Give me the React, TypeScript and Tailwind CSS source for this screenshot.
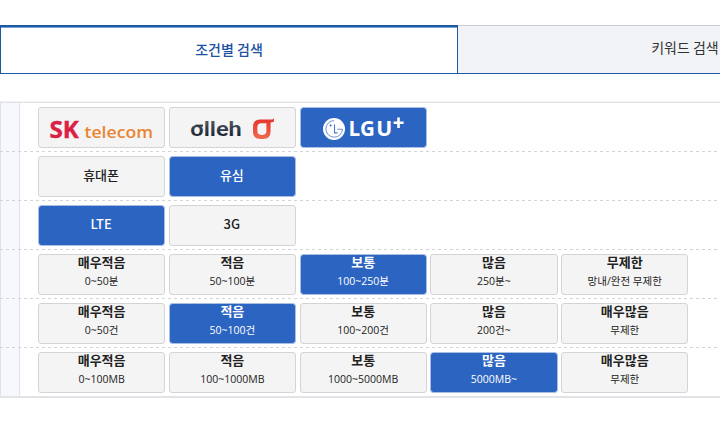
import clsx from "clsx";

type Option = { title: string; desc?: string; active?: boolean };

const simpleRows: Option[][] = [
  [{ title: "휴대폰" }, { title: "유심", active: true }],
  [{ title: "LTE", active: true }, { title: "3G" }],
];

const usageRows: Option[][] = [
  [
    { title: "매우적음", desc: "0~50분" },
    { title: "적음", desc: "50~100분" },
    { title: "보통", desc: "100~250분", active: true },
    { title: "많음", desc: "250분~" },
    { title: "무제한", desc: "망내/완전 무제한" },
  ],
  [
    { title: "매우적음", desc: "0~50건" },
    { title: "적음", desc: "50~100건", active: true },
    { title: "보통", desc: "100~200건" },
    { title: "많음", desc: "200건~" },
    { title: "매우많음", desc: "무제한" },
  ],
  [
    { title: "매우적음", desc: "0~100MB" },
    { title: "적음", desc: "100~1000MB" },
    { title: "보통", desc: "1000~5000MB" },
    { title: "많음", desc: "5000MB~", active: true },
    { title: "매우많음", desc: "무제한" },
  ],
];

const SkLogo = () => (
  <svg width="125" height="39" viewBox="0 0 125 39">
    <text x="10.5" y="29.8" fontFamily="Noto Sans" fontWeight="700" fontSize="23.5" fill="#dc1f45" stroke="#dc1f45" strokeWidth="0.4" textLength="29.5" lengthAdjust="spacingAndGlyphs">
      SK
    </text>
    <text x="45.5" y="29.8" fontFamily="Open Sans" fontWeight="600" fontSize="17" fill="#ea8433" textLength="68.5" lengthAdjust="spacingAndGlyphs">
      telecom
    </text>
  </svg>
);

const OllehLogo = () => (
  <svg width="125" height="39" viewBox="0 0 125 39">
    <defs>
      <linearGradient id="olleh-text" x1="0" y1="0" x2="0" y2="1">
        <stop offset="0.2" stopColor="#4a535f" />
        <stop offset="1" stopColor="#0b1422" />
      </linearGradient>
      <linearGradient id="olleh-mark" x1="0" y1="0" x2="0" y2="1">
        <stop offset="0" stopColor="#e5342b" />
        <stop offset="1" stopColor="#f26a50" />
      </linearGradient>
    </defs>
    <text x="20.3" y="28.3" fontFamily="Roboto" fontWeight="600" fontSize="21" fill="url(#olleh-text)" textLength="51.5" lengthAdjust="spacingAndGlyphs">
      olleh
    </text>
    <path d="M25.5 17.6h7.5" stroke="#303844" strokeWidth="2" />
    <path
      d="M104 10.4v3.2q-1.5 .9-3.4 .9v9q0 7.5-7.5 7.5h-2.6q-7.5 0-7.5-7.5v-4.4q0-7.5 7.5-7.5h9.8q2.3 0 3.7-1.2zM91.2 15.3q-3.8 0-3.8 3.8v4q0 3.8 3.8 3.8h1.4q3.8 0 3.8-3.8v-7.8z"
      fill="url(#olleh-mark)"
      fillRule="evenodd"
    />
  </svg>
);

const LgLogo = () => (
  <svg width="125" height="39" viewBox="0 0 125 39">
    <circle cx="33" cy="21" r="11" fill="#fff" />
    <path d="M33.2 12.6a8.3 8.3 0 1 0 8.3 8.6h-5.2" fill="none" stroke="#6f95d3" strokeWidth="1" />
    <path d="M33.5 16.5v8.4h3" fill="none" stroke="#4c7bc9" strokeWidth="1.1" />
    <circle cx="29.6" cy="17.4" r="1" fill="#2c63c0" />
    <text x="47.5" y="28.3" fontFamily="Open Sans" fontWeight="700" fontSize="20.5" fill="#fff" textLength="26.5" lengthAdjust="spacingAndGlyphs">
      LG
    </text>
    <text x="75.3" y="28.3" fontFamily="Open Sans" fontWeight="700" fontSize="20.5" fill="#fff" textLength="16" lengthAdjust="spacingAndGlyphs">
      U
    </text>
    <path d="M97.5 9.6v10.4M92.6 14.8h10" stroke="#fff" strokeWidth="2.6" />
  </svg>
);

const OptionButton = ({ active, children }: { active?: boolean; children: React.ReactNode }) => (
  <button
    className={clsx(
      "flex h-[41px] w-[127.2px] shrink-0 flex-col items-center rounded-[3px] border",
      active
        ? "border-[#a9bee2] bg-[#2c64c1] bg-clip-padding text-white"
        : "border-[#d2d4d6] bg-[#f4f4f4] text-[#222]"
    )}
  >
    {children}
  </button>
);

const Row = ({ last, children }: { last?: boolean; children: React.ReactNode }) => (
  <div className={clsx("flex flex-col", last ? "h-12" : "h-[49px]")}>
    <div className="flex h-12 gap-[3.6px] pt-1 pl-[38px]">{children}</div>
    {!last && (
      <div className="h-px bg-[repeating-linear-gradient(to_right,#d3d4d9_0px,#d3d4d9_3px,transparent_3px,transparent_6px)]" />
    )}
  </div>
);

export default function App() {
  return (
    <div className="h-[431px] w-[720px] overflow-hidden bg-white pt-[25px] font-['Noto_Sans_CJK_KR',sans-serif]">
      <div className="flex h-[49px] w-[914px] text-sm">
        <button className="w-[458px] shrink-0 border border-t-2 border-[#1c58a5] pb-0.5 font-medium text-[#1c51a4] shadow-[inset_0_1px_0_#79a5d4]">
          조건별 검색
        </button>
        <button className="flex-1 border-t border-b border-t-[#c9cdd1] border-b-[#1c58a5] bg-[#f2f3f7] pr-0.5 pb-1.5 text-[#333]">
          키워드 검색
        </button>
      </div>

      <div className="mt-7 w-[914px] border-t border-b-2 border-l border-[#e2e3e6] bg-[linear-gradient(to_right,#f7f8fc_18px,#e2e3e8_18px,#e2e3e8_19px,#fff_19px)] shadow-[0_-1px_0_#f1f1f3]">
        <div className="-ml-px">
          <Row>
            <OptionButton>
              <SkLogo />
            </OptionButton>
            <OptionButton>
              <OllehLogo />
            </OptionButton>
            <OptionButton active>
              <LgLogo />
            </OptionButton>
          </Row>
          {simpleRows.map((options, i) => (
            <Row key={i}>
              {options.map((o) => (
                <OptionButton key={o.title} active={o.active}>
                  <span className="pr-px text-[13px] leading-[35px] font-medium">{o.title}</span>
                </OptionButton>
              ))}
            </Row>
          ))}
          {usageRows.map((options, i) => (
            <Row key={i} last={i === usageRows.length - 1}>
              {options.map((o) => (
                <OptionButton key={o.title} active={o.active}>
                  <span className="h-4 text-[13px] leading-[13px] font-bold">{o.title}</span>
                  <span className="font-['Open_Sans','Noto_Sans_CJK_KR',sans-serif] text-[10.5px] leading-[21px]">
                    {o.desc}
                  </span>
                </OptionButton>
              ))}
            </Row>
          ))}
        </div>
      </div>
    </div>
  );
}
